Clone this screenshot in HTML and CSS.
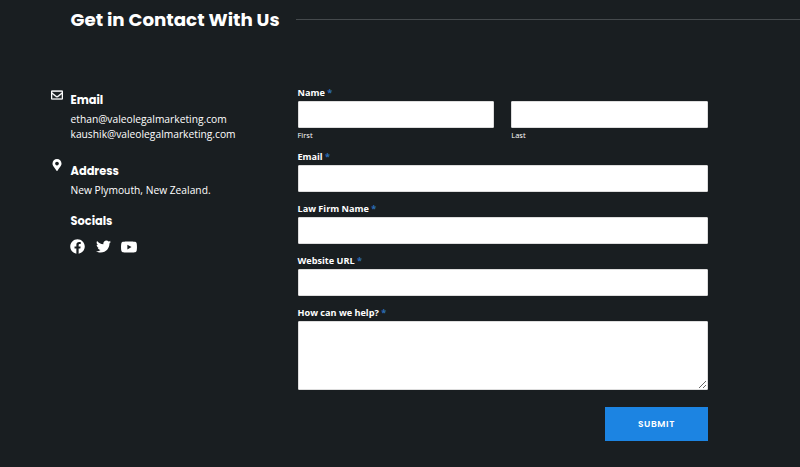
FILE: index.html
```html
<!DOCTYPE html>
<html lang="en">
<head>
    <meta charset="UTF-8">
    <meta name="viewport" content="width=device-width, initial-scale=1.0">
    <title>Get in Contact With Us</title>
    <link rel="stylesheet" href="styles.css">
</head>
<body>
    <header class="section-title">
        <h2>Get in Contact With Us</h2>
        <span class="title-line"></span>
    </header>

    <main class="contact">
        <aside class="contact-info">
            <div class="info-item email-item">
                <svg class="info-icon mail-icon" viewBox="0 0 512 512" width="12" height="12"><path d="M464 64H48C21.500 64 0 85.500 0 112v288c0 26.500 21.500 48 48 48h416c26.500 0 48-21.500 48-48V112c0-26.500-21.500-48-48-48zm0 48v40.800c-22.400 18.300-58.200 46.700-134.600 106.500-16.800 13.200-50.200 45-73.400 44.700-23.200.4-56.600-31.500-73.400-44.700C106.200 199.500 70.400 171.100 48 152.800V112h416zM48 400V214.400c22.900 18.300 55.400 43.900 104.900 82.600 21.900 17.200 60.100 55.200 103.100 55 42.700.2 80.500-37.200 103.100-55 49.500-38.800 82-64.400 104.900-82.700V400H48z"/></svg>
                <div>
                    <h3>Email</h3>
                    <p>ethan@valeolegalmarketing.com<br>kaushik@valeolegalmarketing.com</p>
                </div>
            </div>
            <div class="info-item address-item">
                <svg class="info-icon pin-icon" viewBox="0 0 384 512" width="12" height="12"><path d="M172.300 501.700C27 291 0 269.400 0 192 0 86 86 0 192 0s192 86 192 192c0 77.400-27 99-172.300 309.700-9.500 13.800-29.900 13.800-39.400 0zM192 272c44.200 0 80-35.800 80-80s-35.800-80-80-80-80 35.800-80 80 35.800 80 80 80z"/></svg>
                <div>
                    <h3>Address</h3>
                    <p>New Plymouth, New Zealand.</p>
                </div>
            </div>
            <div class="socials">
                <h3>Socials</h3>
                <div class="social-links">
                    <a href="#" aria-label="Facebook"><svg viewBox="0 0 512 512" width="15" height="15"><path d="M504 256C504 119 393 8 256 8S8 119 8 256c0 123.800 90.700 226.400 209.300 245V327.700h-63V256h63v-54.600c0-62.200 37-96.500 93.700-96.500 27.100 0 55.500 4.800 55.500 4.800v61h-31.300c-30.800 0-40.400 19.100-40.400 38.700V256h68.800l-11 71.700h-57.800V501C413.300 482.400 504 379.800 504 256z"/></svg></a>
                    <a href="#" aria-label="Twitter"><svg viewBox="0 0 512 512" width="15" height="15"><path d="M459.400 151.700c.3 4.500.3 9.100.3 13.600 0 138.700-105.600 298.600-298.600 298.600-59.500 0-114.700-17.200-161.100-47.100 8.400 1 16.600 1.300 25.300 1.300 49.100 0 94.200-16.600 130.300-44.800-46.100-1-84.800-31.200-98.100-72.800 6.500 1 13 1.600 19.800 1.600 9.400 0 18.800-1.300 27.600-3.600-48.100-9.700-84.100-52-84.100-103v-1.300c14 7.800 30.200 12.700 47.400 13.300-28.300-18.800-46.800-51-46.800-87.400 0-19.500 5.200-37.400 14.300-53 51.700 63.700 129.300 105.300 216.400 109.800-1.600-7.800-2.600-15.900-2.600-24 0-57.800 46.800-104.900 104.900-104.900 30.200 0 57.500 12.700 76.700 33.100 23.700-4.500 46.500-13.300 66.600-25.300-7.800 24.400-24.400 44.800-46.100 57.800 21.100-2.300 41.600-8.100 60.400-16.200-14.300 20.800-32.200 39.300-52.600 54.300z"/></svg></a>
                    <a href="#" aria-label="YouTube"><svg viewBox="14 63 548 386" width="16" height="12"><path d="M549.700 124.100c-6.300-23.700-24.800-42.300-48.300-48.600C458.800 64 288 64 288 64S117.200 64 74.600 75.500c-23.500 6.300-42 24.900-48.300 48.600C14.900 167 14.900 256.400 14.900 256.400s0 89.400 11.400 132.300c6.300 23.700 24.800 41.500 48.300 47.800C117.200 448 288 448 288 448s170.800 0 213.400-11.500c23.500-6.300 42-24.200 48.300-47.800 11.400-42.900 11.400-132.300 11.400-132.300s0-89.400-11.400-132.300zM232.200 337.600V175.200l142.700 81.200-142.700 81.200z"/></svg></a>
                </div>
            </div>
        </aside>

        <form class="contact-form">
            <div class="field name-field">
                <label for="first">Name <span class="required">*</span></label>
                <div class="name-row">
                    <div class="name-col">
                        <input type="text" id="first">
                        <label class="sublabel" for="first">First</label>
                    </div>
                    <div class="name-col">
                        <input type="text" id="last">
                        <label class="sublabel" for="last">Last</label>
                    </div>
                </div>
            </div>
            <div class="field">
                <label for="email">Email <span class="required">*</span></label>
                <input type="email" id="email">
            </div>
            <div class="field">
                <label for="firm">Law Firm Name <span class="required">*</span></label>
                <input type="text" id="firm">
            </div>
            <div class="field">
                <label for="website">Website URL <span class="required">*</span></label>
                <input type="url" id="website">
            </div>
            <div class="field">
                <label for="message">How can we help? <span class="required">*</span></label>
                <textarea id="message"></textarea>
            </div>
            <button type="submit" class="submit-btn">SUBMIT</button>
        </form>
    </main>
</body>
</html>
```
FILE: styles.css
```css
* {
    box-sizing: border-box;
}
body {
    margin: 0;
    height: 467px;
    overflow: hidden;
    background-color: #191e21;
    color: #fff;
    font-family: "Open Sans", sans-serif;
}
h2, h3, p {
    margin: 0;
}
h2, h3, .submit-btn {
    font-family: "Poppins", "Inter", sans-serif;
}
.section-title {
    display: flex;
    align-items: center;
    gap: 17px;
    height: 39px;
    padding-left: 70.5px;
}
h2 {
    font-size: 18.25px;
    line-height: 26px;
    font-weight: 700;
    width: 208.5px;
    white-space: nowrap;
}
.title-line {
    flex: 1;
    height: 1px;
    background-color: #454a4d;
}
.contact {
    display: grid;
    grid-template-columns: 227.5px 410.5px;
    column-gap: 20px;
    padding: 46px 0 0 50px;
}
.contact-info {
    padding-top: 5px;
}
.contact-info svg {
    display: block;
    fill: #fff;
}
.info-item {
    display: grid;
    grid-template-columns: 12px 1fr;
    column-gap: 8.5px;
}
.info-icon {
    margin-left: 0.5px;
}
.mail-icon {
    margin-top: -1px;
    stroke: #fff;
    stroke-width: 12;
}
.pin-icon {
    margin-top: -2px;
}
h3 {
    font-size: 11.4px;
    line-height: 20px;
    font-weight: 700;
}
.info-item p {
    padding-top: 2px;
    font-size: 10.25px;
    line-height: 15px;
    white-space: nowrap;
}
.email-item {
    height: 71px;
}
.address-item {
    height: 50px;
}
.socials {
    padding-left: 20.5px;
}
.social-links {
    display: flex;
    align-items: center;
    gap: 10.5px;
    margin-left: -0.5px;
    padding-top: 8px;
}
.contact-form {
    display: flex;
    flex-direction: column;
}
.field {
    display: flex;
    flex-direction: column;
    height: 52px;
}
.field label {
    font-size: 9.15px;
    line-height: 14px;
    font-weight: 700;
    padding-top: 1px;
    margin-bottom: 1px;
}
.required {
    color: #2b6cb3;
}
.name-field {
    height: 64px;
}
.name-row {
    display: grid;
    grid-template-columns: 1fr 1fr;
    column-gap: 17px;
}
.name-col {
    display: flex;
    flex-direction: column;
}
.field .sublabel {
    font-size: 7.5px;
    line-height: 12px;
    font-weight: 400;
    padding: 0;
    margin: 1px 0 0;
}
input, textarea {
    display: block;
    width: 100%;
    height: 27px;
    margin: 0;
    padding: 4px 6px;
    border: 1px solid #ddd;
    border-radius: 1px;
    background-color: #fff;
    font: inherit;
    font-size: 10px;
}
textarea {
    height: 69px;
    flex-shrink: 0;
}
.submit-btn {
    align-self: flex-end;
    width: 103px;
    height: 34px;
    margin-top: 50px;
    padding: 0;
    border: none;
    background-color: #1c84e2;
    color: #fff;
    font-size: 9px;
    font-weight: 600;
    letter-spacing: 0.6px;
    cursor: pointer;
}
```
